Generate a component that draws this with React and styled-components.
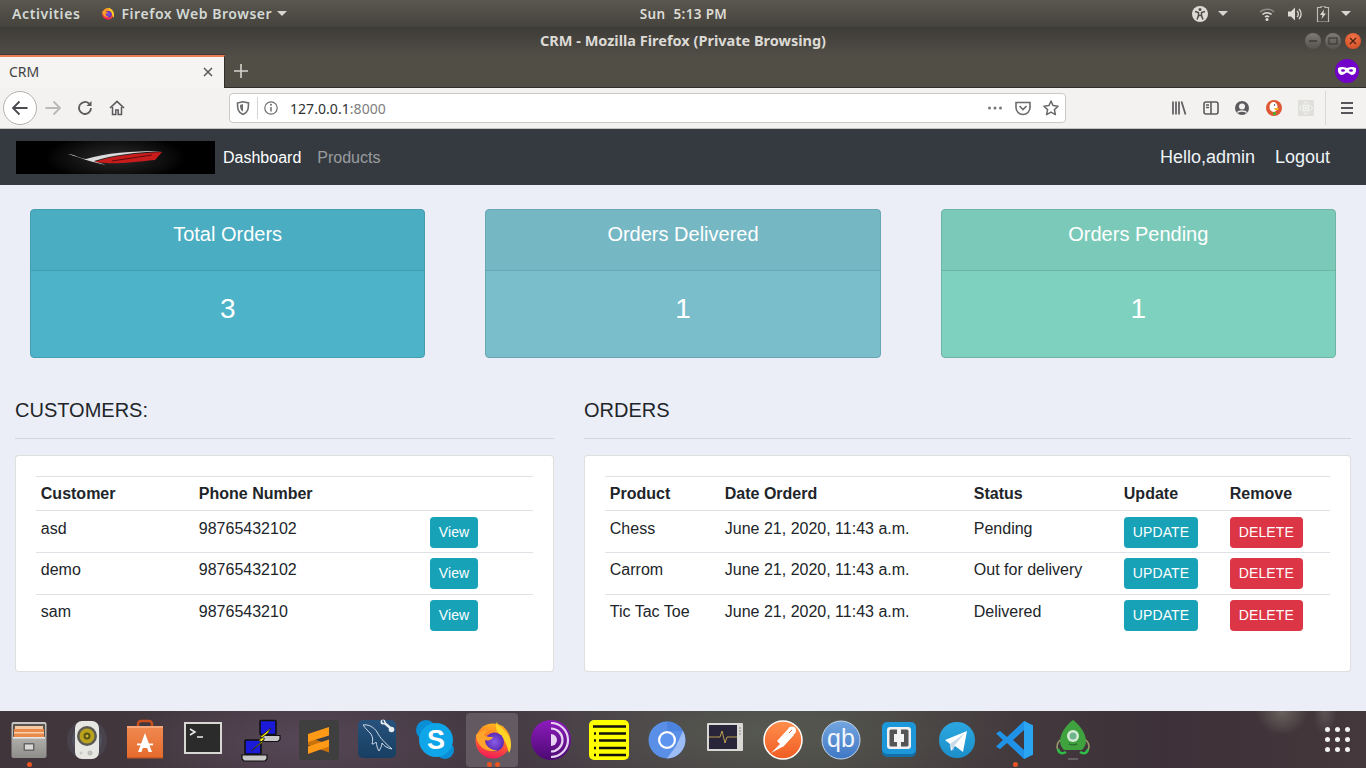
import React from "react";
import styled, { createGlobalStyle } from "styled-components";

const Global = createGlobalStyle`
  html, body { margin: 0; padding: 0; height: 100%; overflow: hidden; }
  body { font-family: "Liberation Sans", Arial, sans-serif; background: #ebeef6; color: #212529; }
  * { box-sizing: border-box; }
`;

const Screen = styled.div`
  width: 1366px; height: 768px; display: flex; flex-direction: column; overflow: hidden;
`;

/* GNOME top bar */
const TopBar = styled.div`
  height: 27px; flex: none; display: grid; grid-template-columns: 1fr auto 1fr; align-items: center;
  background: linear-gradient(#5a574f, #45433d);
  color: #dedbd4; font: 600 14px "Noto Sans", sans-serif; padding: 0 15px 0 12px;
`;
const TopLeft = styled.div`display: flex; align-items: center;`;
const Activities = styled.span`letter-spacing: 0.6px; color: #d5dad6; margin-right: 20px;`;
const AppIcon = styled.span`display: flex; width: 16px;`;
const AppName = styled.span`margin-left: 5px; letter-spacing: 0.55px; color: #d5dad6;`;
const Clock = styled.div`display: flex; gap: 8px; color: #dedbd4; font-size: 13.5px; letter-spacing: 0.35px; margin-left: 4px;`;
const TopRight = styled.div`display: flex; align-items: center; justify-content: flex-end;`;
const TopGap = styled.span`width: ${p => p.$w}px;`;
const Caret = styled.span`
  display: inline-block; width: 0; height: 0; border-left: 5px solid transparent; border-right: 5px solid transparent;
  border-top: 5px solid #d8d6d0; margin-left: ${p => p.$ml || 4}px;
`;

/* window title */
const TitleBar = styled.div`
  height: 28px; flex: none; display: grid; grid-template-columns: 1fr auto 1fr; align-items: center;
  background: linear-gradient(#3e3c37, #504d46);
  color: #dcdad5; font: 700 14.5px/20px "Noto Sans", sans-serif; padding: 0 5px;
`;
const TitleText = styled.span`margin-top: -2px;`;
const WinBtns = styled.div`display: flex; justify-content: flex-end; gap: 4px; grid-column: 3;`;
const WinBtn = styled.div`
  width: 16px; height: 16px; border-radius: 50%; display: flex; align-items: center; justify-content: center;
  background: ${p => p.$close ? "radial-gradient(circle at 50% 30%, #f0734a, #cf4a1f)" : "linear-gradient(#7d7a74, #55534d)"};
`;

/* tabs */
const TabStrip = styled.div`
  height: 33px; flex: none; display: flex; align-items: stretch; background: #514e46; border-bottom: 1px solid #2f2e2a;
`;
const Tab = styled.div`
  width: 225px; background: #f5f4f2; border-top: 2px solid #ef7b55; border-right: 1px solid #2f2e2a; margin-bottom: -1px;
  display: flex; align-items: center; justify-content: space-between; padding: 0 10px 2px 9px;
  font: 14px "Noto Sans", sans-serif; color: #3f4346; box-shadow: 0 -1px 0 #3a3833;
`;
const NewTab = styled.div`width: 32px; display: flex; align-items: center; justify-content: center;`;
const Mask = styled.div`
  margin-left: auto; margin-right: 7px; align-self: center; width: 24px; height: 24px; border-radius: 50%;
  background: #7200c8; display: flex; align-items: center; justify-content: center;
`;

/* browser toolbar */
const NavToolbar = styled.div`
  height: 41px; flex: none; display: flex; align-items: center; background: #f3f2f0; border-bottom: 1px solid #c4c3c0; padding-left: 3px;
`;
const BackBtn = styled.div`
  width: 34px; height: 34px; border-radius: 50%; background: #fff; border: 1px solid #b3b2af;
  display: flex; align-items: center; justify-content: center;
`;
const ToolBtn = styled.div`
  width: ${p => p.$w || 32}px; height: 32px; flex: none; display: flex; align-items: center; justify-content: center;
`;
const UrlBar = styled.div`
  width: 837px; height: 30px; margin-left: 96px; background: #fff; border: 1px solid #cbcac7; border-radius: 4px;
  display: flex; align-items: center; padding: 0 0 0 5px; font: 14px "Noto Sans", sans-serif; color: #2f3134;
`;
const UrlDivider = styled.div`width: 1px; height: 22px; background: #d5d4d2; margin: 0 2px 0 6px;`;
const UrlText = styled.span`margin-left: 8px; letter-spacing: 0.05px; & > em { font-style: normal; color: #7e7e7e; }`;
const UrlEnd = styled.div`margin-left: auto; display: flex; align-items: center; gap: 0;`;
const ToolRight = styled.div`margin-left: 97px; display: flex; align-items: center;`;
const ToolSep = styled.div`width: 1px; height: 34px; background: #d9d8d5; margin: 0 6px 0 3px;`;

/* app navbar */
const Nav = styled.nav`
  height: 56px; flex: none; background: #343a40; display: flex; align-items: center; padding: 0 36px 0 16px; font-size: 16px;
`;
const Logo = styled.div`
  width: 199px; height: 33px; margin-right: 8px;
  background: radial-gradient(ellipse 70px 24px at 50% 50%, #2b2b2b, #0a0a0a 80%, #000);
`;
const NavLink = styled.a`
  color: ${p => p.$dim ? "rgba(255,255,255,.5)" : "#fff"}; margin-right: 16px; padding-top: 1px;
`;
const NavRight = styled.div`
  margin-left: auto; display: flex; gap: 20px; font-size: 18px; color: #eef3f6;
`;

/* page */
const Page = styled.main`flex: 1; min-height: 0; background: #ebeef6;`;
const StatRow = styled.section`
  display: grid; grid-template-columns: repeat(3, 1fr); gap: 60px; padding: 24px 30px 0;
`;
const StatCard = styled.div`
  height: 149px; border: 1px solid ${p => p.$line}; border-radius: 4px; color: #fff; text-align: center;
  background: ${p => p.$bg}; overflow: hidden; display: flex; flex-direction: column;
`;
const StatHead = styled.div`
  height: 61px; flex: none; padding-top: 12px; font-size: 20px; line-height: 24px;
  background: rgba(0,0,0,.03); border-bottom: 1px solid ${p => p.$line};
`;
const StatValue = styled.div`
  flex: 1; padding-top: 21px; font-size: 28px; line-height: 33.6px;
`;
const Columns = styled.section`
  display: grid; grid-template-columns: 539px 767px; gap: 30px; padding: 40px 15px 0;
`;
const Heading = styled.h5`margin: 0; font-size: 20px; line-height: 24px; font-weight: 500; color: #212529;`;
const Rule = styled.hr`margin: 16px 0; border: 0; border-top: 1px solid rgba(0,0,0,.1);`;
const Panel = styled.div`
  background: #fff; border: 1px solid rgba(0,0,0,.125); border-radius: 4px; padding: 20px; height: 217px;
`;
const Table = styled.table`
  width: 100%; table-layout: fixed; border-collapse: collapse; font-size: 16px; line-height: 24px;
  tbody tr:first-child td { padding-top: 5.8px; padding-bottom: 4.3px; }
`;
const Th = styled.th`
  width: ${p => p.$w}px; text-align: left; padding: 4.8px 4.8px 4.3px; font-weight: 700; vertical-align: bottom;
  border-top: 1px solid #dee2e6; border-bottom: 1px solid #dee2e6;
`;
const Td = styled.td`padding: 4.8px; vertical-align: top; border-top: 1px solid #dee2e6;`;
const Btn = styled.a`
  display: block; width: fit-content; height: 31px; padding: 4px 8px; border: 1px solid ${p => p.$bg}; border-radius: 3.2px;
  font-size: 14px; line-height: 21px; color: #fff; background: ${p => p.$bg}; letter-spacing: 0.1px;
`;

/* dock */
const Dock = styled.footer`
  height: 57px; flex: none; display: flex; align-items: center; position: relative;
  background:
    radial-gradient(ellipse 26px 24px at 1282px 0px, rgba(170,170,150,.4), transparent 100%),
    radial-gradient(ellipse 12px 24px at 1325px 0px, rgba(170,170,160,.25), transparent 100%),
    radial-gradient(ellipse 260px 70px at 760px 20px, rgba(95,105,90,.55), transparent 100%),
    radial-gradient(ellipse 180px 60px at 300px 30px, rgba(105,85,110,.5), transparent 100%),
    linear-gradient(90deg, #40353a, #463b44 40%, #4a4644 60%, #3d3038 85%, #44383c);
`;
const DockItem = styled.div`
  position: relative; width: 58px; height: 57px; flex: none; display: flex; align-items: center; justify-content: center;
  ${p => p.$active && `&::before { content: ""; position: absolute; left: 2px; right: 4px; top: 2px; bottom: 1px; background: rgba(255,255,255,.16); border-radius: 4px; }`}
  & > svg { position: relative; }
`;
const Dots = styled.div`
  position: absolute; left: 0; right: 0; bottom: 1px; display: flex; justify-content: center; gap: 3px;
`;
const Dot = styled.span`width: 5px; height: 5px; border-radius: 50%; background: #e95420;`;
const AppGrid = styled.div`
  margin-left: auto; margin-right: 16px; display: grid; grid-template-columns: repeat(3, 5px); gap: 5px; 
`;
const GridDot = styled.span`width: 5px; height: 5px; border-radius: 50%; background: #f2f2f2;`;

/* icons */
const S = ({ size = 16, vb = "0 0 16 16", children }) => (
  <svg width={size} height={size} viewBox={vb} fill="none">{children}</svg>
);
const FirefoxIcon = ({ size = 48, id = "d" }) => (
  <S size={size} vb="0 0 48 48">
    <defs>
      <linearGradient id={`ff1${id}`} x1="0.6" y1="0" x2="0.4" y2="1"><stop offset="0" stopColor="#ffb51f" /><stop offset=".5" stopColor="#ff6a2a" /><stop offset="1" stopColor="#f0185a" /></linearGradient>
      <radialGradient id={`ff2${id}`}><stop offset="0" stopColor="#8a5ce6" /><stop offset="1" stopColor="#5a2ab5" /></radialGradient>
    </defs>
    <circle cx="24" cy="25" r="17.500" fill={`url(#ff1${id})`} />
    <path d="M28 5.500c0 4 5 6 9 10.500 4 4.500 5 9 5 13 0 3-.5 5-2 8-2-7-4-14-10-19-3-3-4-8-2-12.500z" fill="#ffd426" />
    <circle cx="25.500" cy="26" r="9.500" fill={`url(#ff2${id})`} />
    <path d="M7 19c3-3 7-5 12-4l-4 4c2 2 6 2 9 2-1 3-5 4-8 3 0 6 6 11 13 10-7 3-15 0-19-6-2-3-3-6-3-9z" fill="#ffa42a" />
  </S>
);
const Files = () => (
  <S size={48} vb="0 0 48 48">
    <defs><linearGradient id="fa" x1="0" y1="0" x2="0" y2="1"><stop offset="0" stopColor="#c9c7c4" /><stop offset="1" stopColor="#8f8d8a" /></linearGradient></defs>
    <rect x="6.500" y="6" width="35" height="36" rx="2" fill="url(#fa)" />
    <rect x="8" y="8" width="32" height="13" rx="1" fill="#5a5350" />
    <rect x="10" y="10" width="28" height="3" fill="#f7c9a2" />
    <rect x="9" y="13" width="30" height="8" fill="#e98a4a" />
    <rect x="9" y="16" width="30" height="1.500" fill="#f9d2ad" />
    <rect x="8" y="21" width="32" height="1.500" fill="#e8e7e5" />
    <rect x="18.500" y="27" width="11" height="8" rx="1" fill="#666" />
    <rect x="20" y="28.500" width="8" height="5" fill="#d9d8d6" />
  </S>
);
const Speaker = () => (
  <S size={48} vb="0 0 48 48">
    <circle cx="24" cy="24" r="20" fill="#6c7a94" opacity=".18" />
    <circle cx="24" cy="24" r="15" fill="#7a8aa5" opacity=".2" />
    <rect x="12" y="5" width="24" height="38" rx="7" fill="#e6e6e2" />
    <circle cx="24" cy="20" r="10" fill="#5c5a55" />
    <circle cx="24" cy="20" r="7.500" fill="#b9a21c" />
    <circle cx="24" cy="20" r="3.500" fill="#5b5212" />
    <circle cx="24" cy="20" r="1.500" fill="#c9b63a" />
    <circle cx="27" cy="37" r="2.500" fill="#bfbfbb" />
    <circle cx="18" cy="37" r="1.500" fill="#c8c8c4" />
  </S>
);
const Store = () => (
  <S size={48} vb="0 0 48 48">
    <defs><linearGradient id="st" x1="0" y1="0" x2="0" y2="1"><stop offset="0" stopColor="#f08a50" /><stop offset="1" stopColor="#e66a2c" /></linearGradient></defs>
    <path d="M17 14V8a3 3 0 0 1 3-3h8a3 3 0 0 1 3 3v6" stroke="#c94f1e" strokeWidth="2.500" />
    <path d="M6 10h36v32H6z" fill="url(#st)" />
    <path d="M6 10h36v2H6z" fill="#f6a679" />
    <path d="M24 17l-7 19h3.500l1.300-4h4.400l1.300 4H31z" fill="#fff" />
    <rect x="16" y="27.500" width="16" height="1.800" fill="#fff" />
    <rect x="6" y="41" width="36" height="1.500" fill="#c95a24" />
  </S>
);
const Terminal = () => (
  <S size={48} vb="0 0 48 48">
    <rect x="5" y="6" width="38" height="32" fill="#d7d7d4" />
    <rect x="7" y="8" width="34" height="28" fill="#2b2b2b" />
    <path d="M11 13l5 3-5 3" stroke="#ececec" strokeWidth="1.500" />
    <path d="M18 21h6" stroke="#ececec" strokeWidth="1.500" />
  </S>
);
const PC = ({ x, y, l, r }) => (
  <g transform={`translate(${x} ${y})`}>
    <path d={`M${l} 15h${r - l}v4l-2 2H${l + 2}l-2-2z`} fill="#c8c8c8" stroke="#111" strokeWidth="1.200" />
    <rect x="0" y="0" width="16" height="14" rx="1" fill="#1a1ad8" stroke="#111" strokeWidth="1.600" />
  </g>
);
const Putty = () => (
  <S size={48} vb="0 0 48 48">
    <PC x={23} y={4.5} l={2} r={20} />
    <PC x={8} y={24} l={-3} r={22} />
    <path d="M34 12L23 21l5 1.500L14 35l12-9-4.500-1.500L31 17z" fill="#ffee00" stroke="#222" strokeWidth=".8" />
  </S>
);
const Sublime = () => (
  <S size={48} vb="0 0 48 48">
    <rect x="4" y="4" width="40" height="40" rx="3" fill="#3f3f3f" />
    <path d="M13 21l21 7.500v8L13 29z" fill="#c9720a" />
    <path d="M13 18l21-7v8.500L13 26z" fill="#ff9a16" />
    <path d="M13 30.500l21-7v7L13 38z" fill="#ff9a16" />
  </S>
);
const Workbench = () => (
  <S size={48} vb="0 0 48 48">
    <defs><linearGradient id="wb" x1="0" y1="0" x2="0" y2="1"><stop offset="0" stopColor="#27527c" /><stop offset="1" stopColor="#183f63" /></linearGradient></defs>
    <rect x="5" y="4" width="38" height="38" rx="5" fill="url(#wb)" />
    <path d="M10 9c5-1 11 2 14 7 3 6 8 11 15 17-5-1-8-3-10-6 0 3-2 6-3 8-2-3-2-5-3-9-1 1-2 2-4 2 1-3 1-7-1-10-3-3-5-5-8-9z" fill="none" stroke="#cfdbe6" strokeWidth="1" />
    <path d="M31 6.500l7 6" stroke="#e8edf2" strokeWidth="2.400" />
    <circle cx="38.500" cy="13.500" r="2.800" fill="#e8edf2" />
    <circle cx="30" cy="6" r="2.500" fill="#e8edf2" />
    <path d="M30 3l-1 3 2.500 1.500z" fill="#27527c" />
  </S>
);
const Skype = () => (
  <S size={48} vb="0 0 48 48">
    <circle cx="15" cy="14" r="10" fill="#0a8fd6" />
    <circle cx="34" cy="34" r="9" fill="#0a8fd6" />
    <circle cx="25" cy="24" r="17" fill="#0fa5e9" />
    <text x="25" y="33" textAnchor="middle" fontFamily="'Liberation Sans', sans-serif" fontWeight="700" fontSize="27" fill="#fff">S</text>
  </S>
);
const Tor = () => (
  <S size={48} vb="0 0 48 48">
    <defs><linearGradient id="tor" x1="0" y1="0" x2="0" y2="1"><stop offset="0" stopColor="#8d1bbd" /><stop offset="1" stopColor="#4c0a72" /></linearGradient></defs>
    <circle cx="24" cy="24" r="20" fill="url(#tor)" />
    <path d="M24 7a17 17 0 0 1 0 34M24 12.500a11.500 11.500 0 0 1 0 23" stroke="#e8d4f2" strokeWidth="2.200" />
    <path d="M20 18a6 6 0 0 1 0 12z" fill="#e8d4f2" transform="translate(4 0)" />
  </S>
);
const ListIcon = () => (
  <S size={48} vb="0 0 48 48">
    <rect x="4" y="4" width="40" height="40" rx="5" fill="#ffff00" />
    <path d="M8 10.500h33" stroke="#111" strokeWidth="2.500" />
    <path d="M14 17.500h27M14 24.500h27M14 32h27M14 39h27" stroke="#111" strokeWidth="2.500" />
    <path d="M9 17.500h2M9 24.500h2M9 32h2M9 39h2" stroke="#111" strokeWidth="2.500" />
  </S>
);
const Chromium = () => (
  <S size={48} vb="0 0 48 48">
    <circle cx="24" cy="24" r="18.500" fill="#5a8fe8" />
    <path d="M24 5.500a18.500 18.500 0 0 1 16 9.500H24z" fill="#4c83de" />
    <path d="M40 15a18.500 18.500 0 0 1-16 27.500L33 30z" fill="#9cbcf3" />
    <circle cx="24" cy="24" r="9" fill="#fff" />
    <circle cx="24" cy="24" r="6.800" fill="#5c94f0" />
  </S>
);
const Monitor = () => (
  <S size={48} vb="0 0 48 48">
    <rect x="6" y="7" width="36" height="28" rx="1" fill="#d9d8d4" />
    <rect x="8" y="9" width="28" height="24" fill="#28253a" />
    <path d="M8 21h11l2-6 3 12 2-6h10" stroke="#b99e4c" strokeWidth="1" />
    <path d="M38 12h2M38 15h2M38 18h2" stroke="#888" strokeWidth="1" />
  </S>
);
const Postman = () => (
  <S size={48} vb="0 0 48 48">
    <defs><linearGradient id="pm" x1="0" y1="0" x2="0" y2="1"><stop offset="0" stopColor="#ff8f4e" /><stop offset="1" stopColor="#f05c22" /></linearGradient></defs>
    <circle cx="24" cy="24" r="19" fill="url(#pm)" stroke="#fff" strokeWidth="1.500" />
    <path d="M12 37l10-10 3 3zM18 25L29 13l6 6-11 12z" fill="#fff" />
    <circle cx="33" cy="14.500" r="4" fill="#fff" />
    <path d="M30 17l3-3" stroke="#f26b2c" strokeWidth="1" />
  </S>
);
const QB = () => (
  <S size={48} vb="0 0 48 48">
    <defs><linearGradient id="qb" x1="0" y1="0" x2="0" y2="1"><stop offset="0" stopColor="#73a6e0" /><stop offset="1" stopColor="#3f77c4" /></linearGradient></defs>
    <circle cx="24" cy="24" r="19" fill="url(#qb)" stroke="#c6d8ee" strokeWidth="1" />
    <text x="24" y="31" textAnchor="middle" fontFamily="'Liberation Sans', sans-serif" fontSize="25" fill="#f1f6fb">qb</text>
  </S>
);
const VM = () => (
  <S size={48} vb="0 0 48 48">
    <rect x="7" y="7" width="34" height="34" rx="5" fill="#136fa6" />
    <rect x="7" y="6" width="34" height="32" rx="5" fill="#1c98da" />
    <rect x="12" y="11" width="24" height="22" rx="3" fill="#f1f1f1" />
    <path d="M22 13.500h-6a1.500 1.500 0 0 0-1.500 1.500v14a1.500 1.500 0 0 0 1.500 1.500h6zM26 13.500h6a1.500 1.500 0 0 1 1.500 1.500v14a1.500 1.500 0 0 1-1.500 1.500h-6z" fill="#555" />
    <rect x="19" y="18" width="10" height="8" fill="#f4f4f4" />
  </S>
);
const Telegram = () => (
  <S size={48} vb="0 0 48 48">
    <defs><linearGradient id="tg" x1="0" y1="0" x2="0" y2="1"><stop offset="0" stopColor="#2ca7e0" /><stop offset="1" stopColor="#1c8fca" /></linearGradient></defs>
    <circle cx="24" cy="24" r="18" fill="url(#tg)" />
    <path d="M12 24l22-9-4 21-8-6-4 5-1-7z" fill="#fff" />
    <path d="M17 28l15-11-11 13-1 5z" fill="#c8daea" />
  </S>
);
const VSCode = () => (
  <S size={48} vb="0 0 48 48">
    <path d="M33 5l9 4.500v29L33 43 16 27l-7 6-4-2.500L12 24 5 17.500 9 15l7 6zM33 14L22 24l11 10z" fill="#1f93e8" />
    <path d="M33 5l9 4.500v29L33 43z" fill="#2aa5f2" />
  </S>
);
const Rocket = () => (
  <S size={48} vb="0 0 48 48">
    <path d="M24 4c7 5 13 14 13 21 0 4-2 7-4 9H15c-2-2-4-5-4-9 0-7 6-16 13-21z" fill="#3fa23f" />
    <circle cx="24" cy="20" r="6" fill="#d7ecd7" />
    <circle cx="24" cy="20" r="3.500" fill="#6fb38c" />
    <path d="M11 24c-4 4-4 9 0 12M37 24c4 4 4 9 0 12" stroke="#9c9a6a" strokeWidth="1.500" />
    <path d="M9 33c1 5 5 5 8 3M39 33c-1 5-5 5-8 3" stroke="#2fbe45" strokeWidth="2.500" />
    <path d="M19 43h10" stroke="#888" strokeWidth="1" />
    <path d="M20 28c2 1 6 1 8 0" stroke="#2a6e2a" strokeWidth="1.500" />
  </S>
);

const dockApps = [
  { C: Files, dots: 1 }, { C: Speaker }, { C: Store }, { C: Terminal }, { C: Putty }, { C: Sublime }, { C: Workbench }, { C: Skype },
  { C: FirefoxIcon, dots: 2, active: true }, { C: Tor }, { C: ListIcon }, { C: Chromium }, { C: Monitor }, { C: Postman }, { C: QB }, { C: VM },
  { C: Telegram }, { C: VSCode, dots: 1 }, { C: Rocket },
];

const stats = [
  { title: "Total Orders", value: 3, bg: "#4db3c8", line: "#449db0" },
  { title: "Orders Delivered", value: 1, bg: "#7abdcb", line: "#68a6b3" },
  { title: "Orders Pending", value: 1, bg: "#7fd1bf", line: "#6cb5a5" },
];
const customers = [["asd", "98765432102"], ["demo", "98765432102"], ["sam", "9876543210"]];
const orders = [
  ["Chess", "Pending"], ["Carrom", "Out for delivery"], ["Tic Tac Toe", "Delivered"],
];
const INFO = "#17a2b8", DANGER = "#dc3545";

export default function App() {
  return (
    <Screen>
      <Global />
      <TopBar>
        <TopLeft>
          <Activities>Activities</Activities>
          <AppIcon><FirefoxIcon size={17} id="t" /></AppIcon>
          <AppName>Firefox Web Browser</AppName>
          <Caret $ml={5} />
        </TopLeft>
        <Clock><span>Sun</span><span>5:13 PM</span></Clock>
        <TopRight>
          <S size={16}><circle cx="8" cy="8" r="8" fill="#dedbd4" /><circle cx="8" cy="3.500" r="1.500" fill="#4e4c46" /><path d="M3 5.500l3.500 1v3L5 13.500M13 5.500l-3.500 1v3L11 13.500M6.500 9.500h3" stroke="#4e4c46" strokeWidth="1.500" /></S>
          <Caret $ml={10} />
          <TopGap $w={31} />
          <S size={16}><path d="M1 6a10 10 0 0 1 14 0" stroke="#8f8d87" strokeWidth="1.500" /><path d="M3.500 8.500a6.500 6.500 0 0 1 9 0M6 11a3 3 0 0 1 4 0" stroke="#dedbd4" strokeWidth="1.500" /><circle cx="8" cy="13.500" r="1.500" fill="#dedbd4" /></S>
          <TopGap $w={12} />
          <S size={16}><path d="M1 5.500h3l4-4v13l-4-4H1z" fill="#dedbd4" /><path d="M10 5a4 4 0 0 1 0 6M12 3a7 7 0 0 1 0 10" stroke="#dedbd4" strokeWidth="1.300" /></S>
          <TopGap $w={12} />
          <S size={16} vb="0 0 12 16"><path d="M4 0h4v1.500h3.500V16H.5V1.500H4z" fill="none" stroke="#bdbab3" strokeWidth="1.200" /><path d="M7 3.500L3 9h2.500L4.500 13 9 7.500H6.500z" fill="#dedbd4" /></S>
          <Caret $ml={10} />
        </TopRight>
      </TopBar>
      <TitleBar>
        <span />
        <TitleText>CRM - Mozilla Firefox (Private Browsing)</TitleText>
        <WinBtns>
          <WinBtn><S size={10} vb="0 0 10 10"><path d="M1 5h8" stroke="#3c3b37" strokeWidth="1.500" /></S></WinBtn>
          <WinBtn><S size={10} vb="0 0 10 10"><rect x="1" y="2" width="8" height="6" stroke="#3c3b37" strokeWidth="1.200" /></S></WinBtn>
          <WinBtn $close><S size={10} vb="0 0 10 10"><path d="M2 2l6 6M8 2l-6 6" stroke="#4a2012" strokeWidth="1.300" /></S></WinBtn>
        </WinBtns>
      </TitleBar>
      <TabStrip>
        <Tab>
          <span>CRM</span>
          <S size={12} vb="0 0 12 12"><path d="M2 2l8 8M10 2l-8 8" stroke="#55585b" strokeWidth="1.500" /></S>
        </Tab>
        <NewTab><S size={14} vb="0 0 14 14"><path d="M7 0v14M0 7h14" stroke="#d6d4cf" strokeWidth="1.600" /></S></NewTab>
        <Mask><S size={20} vb="0 0 20 20"><path d="M1 7c3-1.500 5-1 9 0 4-1 6-1.500 9 0 .5 4-1 7-4 7-2.500 0-3-2.500-5-2.500S7.500 14 5 14c-3 0-4.500-3-4-7z" fill="#fff" /><ellipse cx="6" cy="9.500" rx="2" ry="1.300" fill="#7200c8" /><ellipse cx="14" cy="9.500" rx="2" ry="1.300" fill="#7200c8" /></S></Mask>
      </TabStrip>
      <NavToolbar>
        <BackBtn><S size={18} vb="0 0 18 18"><path d="M16.500 9H2M8.500 2.500L2 9l6.500 6.500" stroke="#4a4b4e" strokeWidth="1.800" /></S></BackBtn>
        <ToolBtn><S size={18} vb="0 0 18 18"><path d="M1.500 9H16M9.500 2.500L16 9l-6.500 6.500" stroke="#b9b9b8" strokeWidth="1.800" /></S></ToolBtn>
        <ToolBtn><S size={16}><path d="M14 8a6 6 0 1 1-2-4.500" stroke="#5b5b5d" strokeWidth="1.800" /><path d="M14.500 1v5h-5z" fill="#5b5b5d" /></S></ToolBtn>
        <ToolBtn><S size={16}><path d="M1 8l7-6.500L15 8" stroke="#5b5b5d" strokeWidth="1.700" /><path d="M3.500 7v7.500h3.300V10h2.400v4.500h3.300V7" stroke="#5b5b5d" strokeWidth="1.500" /></S></ToolBtn>
        <UrlBar>
          <ToolBtn $w={16}><S size={14} vb="0 0 14 14"><path d="M1.500 2L7 .8 12.500 2c0 5 0 9-5.500 11.500C1.500 11 1.500 7 1.500 2z" fill="none" stroke="#6e6e70" strokeWidth="1.600" /><path d="M7 3v7.500C4.500 9.500 4 7 4 4z" fill="#6e6e70" /></S></ToolBtn>
          <UrlDivider />
          <ToolBtn $w={22}><S size={14} vb="0 0 14 14"><circle cx="7" cy="7" r="6.200" stroke="#6e6e70" strokeWidth="1.200" /><path d="M7 6v4.500" stroke="#6e6e70" strokeWidth="1.500" /><circle cx="7" cy="3.800" r="1" fill="#6e6e70" /></S></ToolBtn>
          <UrlText>127.0.0.1<em>:8000</em></UrlText>
          <UrlEnd>
            <ToolBtn $w={28}><S size={16}><circle cx="2.500" cy="8" r="1.500" fill="#77777a" /><circle cx="8" cy="8" r="1.500" fill="#77777a" /><circle cx="13.500" cy="8" r="1.500" fill="#77777a" /></S></ToolBtn>
            <ToolBtn $w={28}><S size={16}><path d="M1 2.500h14v5a7 7 0 0 1-14 0z" stroke="#6a6a6c" strokeWidth="1.600" /><path d="M4.500 6L8 9.500 11.500 6" stroke="#6a6a6c" strokeWidth="1.600" /></S></ToolBtn>
            <ToolBtn $w={28}><S size={16}><path d="M8 1l2.100 4.600 5 .6-3.700 3.400 1 5L8 12.100l-4.400 2.500 1-5L.9 6.200l5-.6z" stroke="#6a6a6c" strokeWidth="1.500" strokeLinejoin="round" /></S></ToolBtn>
          </UrlEnd>
        </UrlBar>
        <ToolRight>
          <ToolBtn $w={31.750}><S size={16}><path d="M2 1.500v13M5 1.500v13M8 1.500v13M10.500 1.500l4 13" stroke="#5c5c5e" strokeWidth="1.700" /></S></ToolBtn>
          <ToolBtn $w={31.750}><S size={16}><rect x="1" y="2" width="14" height="12" rx="2" stroke="#5c5c5e" strokeWidth="1.600" /><path d="M8 2v12" stroke="#5c5c5e" strokeWidth="1.600" /><path d="M3 5h3M3 7.500h3" stroke="#5c5c5e" strokeWidth="1.300" /></S></ToolBtn>
          <ToolBtn $w={31.750}><S size={16}><circle cx="8" cy="8" r="7" fill="#5c5c5e" /><circle cx="8" cy="6.500" r="3" fill="#f3f2f0" /><path d="M3.500 12.500C5 10.500 11 10.500 12.500 12.500" stroke="#f3f2f0" strokeWidth="1.500" /></S></ToolBtn>
          <ToolBtn $w={31.750}><S size={16}><circle cx="8" cy="8" r="8" fill="#de5833" /><ellipse cx="7.500" cy="7" rx="4" ry="5" fill="#fff" /><path d="M8 8h5l-1 2H9z" fill="#f5b21a" /><path d="M7 12.500l3-.5v3H7z" fill="#4caf30" /><circle cx="8.500" cy="5" r=".7" fill="#222" /></S></ToolBtn>
          <ToolBtn $w={31.750}><S size={16}><rect width="16" height="16" fill="#dfdfdc" /><ellipse cx="8" cy="8" rx="6.500" ry="2.500" stroke="#f4f4f2" strokeWidth="1" /><ellipse cx="8" cy="8" rx="2.500" ry="6.500" stroke="#f4f4f2" strokeWidth="1" /><circle cx="8" cy="8" r="1.500" fill="#f4f4f2" /></S></ToolBtn>
          <ToolSep />
          <ToolBtn $w={30}><S size={14} vb="0 0 14 14"><path d="M1 2h12M1 7h12M1 12h12" stroke="#56565a" strokeWidth="1.800" /></S></ToolBtn>
        </ToolRight>
      </NavToolbar>
      <Nav>
        <Logo>
          <svg width="199" height="33" viewBox="0 0 199 33">
            <path d="M52 13c6 0 10 4 18 5 20-6 45-8 76-8-25 1-50 4-68 10l12 4C78 22 62 16 52 13z" fill="#dcdcdc" />
            <path d="M78 21c17-6 42-9 68-10l-7 8c-19 2-39 4-49 3z" fill="#c81c1c" />
            <path d="M96 20l40-6" stroke="#3a0808" strokeWidth=".8" />
          </svg>
        </Logo>
        <NavLink>Dashboard</NavLink>
        <NavLink $dim>Products</NavLink>
        <NavRight><span>Hello,admin</span><span>Logout</span></NavRight>
      </Nav>
      <Page>
        <StatRow>
          {stats.map(s => (
            <StatCard key={s.title} $bg={s.bg} $line={s.line}>
              <StatHead $line={s.line}>{s.title}</StatHead>
              <StatValue>{s.value}</StatValue>
            </StatCard>
          ))}
        </StatRow>
        <Columns>
          <div>
            <Heading>CUSTOMERS:</Heading>
            <Rule />
            <Panel>
              <Table>
                <thead><tr><Th $w={158}>Customer</Th><Th $w={231}>Phone Number</Th><Th $w={108} /></tr></thead>
                <tbody>
                  {customers.map(([n, p]) => (
                    <tr key={n}><Td>{n}</Td><Td>{p}</Td><Td><Btn $bg={INFO}>View</Btn></Td></tr>
                  ))}
                </tbody>
              </Table>
            </Panel>
          </div>
          <div>
            <Heading>ORDERS</Heading>
            <Rule />
            <Panel>
              <Table>
                <thead><tr><Th $w={115}>Product</Th><Th $w={249}>Date Orderd</Th><Th $w={150}>Status</Th><Th $w={106}>Update</Th><Th $w={105}>Remove</Th></tr></thead>
                <tbody>
                  {orders.map(([n, st]) => (
                    <tr key={n}>
                      <Td>{n}</Td><Td>June 21, 2020, 11:43 a.m.</Td><Td>{st}</Td>
                      <Td><Btn $bg={INFO}>UPDATE</Btn></Td><Td><Btn $bg={DANGER}>DELETE</Btn></Td>
                    </tr>
                  ))}
                </tbody>
              </Table>
            </Panel>
          </div>
        </Columns>
      </Page>
      <Dock>
        {dockApps.map(({ C, dots, active }, i) => (
          <DockItem key={i} $active={active}>
            <C />
            {dots && <Dots>{Array.from({ length: dots }).map((_, j) => <Dot key={j} />)}</Dots>}
          </DockItem>
        ))}
        <AppGrid>{Array.from({ length: 9 }).map((_, i) => <GridDot key={i} />)}</AppGrid>
      </Dock>
    </Screen>
  );
}
